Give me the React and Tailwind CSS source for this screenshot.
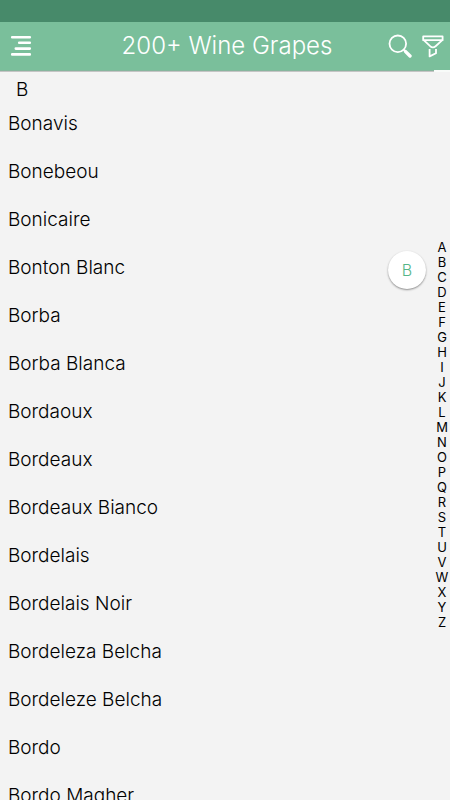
const grapes = [
  'Bonavis',
  'Bonebeou',
  'Bonicaire',
  'Bonton Blanc',
  'Borba',
  'Borba Blanca',
  'Bordaoux',
  'Bordeaux',
  'Bordeaux Bianco',
  'Bordelais',
  'Bordelais Noir',
  'Bordeleza Belcha',
  'Bordeleze Belcha',
  'Bordo',
  'Bordo Magher',
];

const letters = 'ABCDEFGHIJKLMNOPQRSTUVWXYZ'.split('');

const MenuIcon = () => (
  <svg width="22" height="22" viewBox="0 0 22 22" fill="none" stroke="currentColor" strokeWidth="2.6" strokeLinecap="round">
    <path d="M2.2 2.2H19.8M9.2 7.8H19.8M5.8 13.6H19.8M2.2 19.4H19.8" />
  </svg>
);

const SearchIcon = () => (
  <svg width="24" height="24" viewBox="0 0 24 24" fill="none" stroke="currentColor">
    <circle cx="9.8" cy="9.8" r="8.3" strokeWidth="1.8" />
    <path d="M15.8 15.8L17.5 17.5" strokeWidth="2" />
    <path d="M17.6 17.6L22 22" strokeWidth="3.4" strokeLinecap="round" />
  </svg>
);

const FilterIcon = () => (
  <svg width="22" height="24" viewBox="0 0 22 24" fill="none" stroke="currentColor" strokeWidth="1.8" strokeLinejoin="round">
    <path d="M1.2 2.4H20.6V6.2H1.2Z" />
    <path d="M2 6.4L8.2 12.2C9.8 13.6 12 13.6 13.6 12.2L20 6.4" />
    <path d="M7.6 15V22.4L14 19.2V15" />
  </svg>
);

const Header = () => (
  <header className="shrink-0">
    <div className="h-[22px] bg-[#478a6a]" />
    <div className="flex h-12 items-center bg-[#7abf9b] px-1.5 text-white">
      <div className="flex flex-1 pl-1">
        <button type="button" aria-label="Menu"><MenuIcon /></button>
      </div>
      <h1 className="text-2xl leading-7 font-light">200+ Wine Grapes</h1>
      <div className="flex flex-1 items-center justify-end gap-2.5">
        <button type="button" aria-label="Search"><SearchIcon /></button>
        <button type="button" aria-label="Filter"><FilterIcon /></button>
      </div>
    </div>
    <div className="flex h-0.5">
      <div className="flex-1 border-t border-[#86b59d] bg-[#c4c4c4]" />
      <div className="w-4 bg-[#f8fbf9]" />
    </div>
  </header>
);

const LetterIndex = ({ current }) => (
  <nav aria-label="Letters" className="absolute inset-y-0 right-0 flex w-4 flex-col justify-center pb-0.5 text-center text-[13px] leading-[15px]">
    {letters.map(letter => (
      <a key={letter} href={`#${letter}`} className="relative block">
        {letter}
        {letter === current && (
          <span className="absolute -top-1 right-6 flex size-[38px] items-center justify-center rounded-full bg-white text-base font-light text-[#55b587] shadow-[0_1px_2px_0_#8c8c8c]">
            {letter}
          </span>
        )}
      </a>
    ))}
  </nav>
);

export default function App() {
  return (
    <div className="flex h-screen flex-col overflow-hidden bg-[#f3f3f3] font-['Inter',sans-serif] text-black">
      <Header />
      <main className="relative min-h-0 flex-1">
        <section id="B" className="h-full overflow-y-auto [scrollbar-width:none]">
          <h2 className="pt-2 pl-4 text-[19px] leading-5 font-light">B</h2>
          <ul>
            {grapes.map(name => (
              <li key={name} className="flex h-12 items-center pl-2 text-[19px] font-light">{name}</li>
            ))}
          </ul>
        </section>
        <LetterIndex current="B" />
      </main>
    </div>
  );
}
